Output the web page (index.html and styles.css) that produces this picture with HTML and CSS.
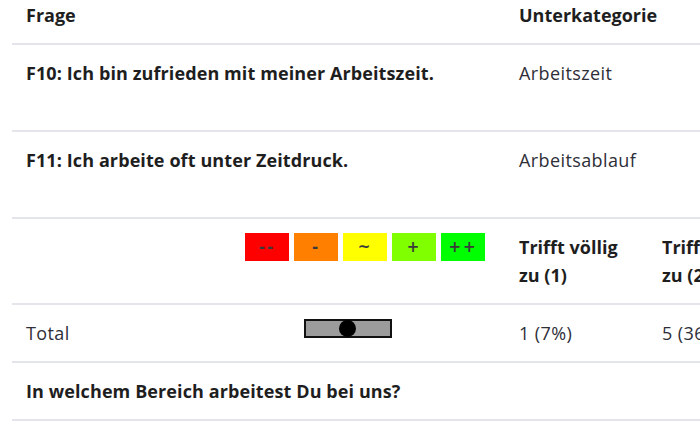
FILE: index.html
```html
<!DOCTYPE html>
<html lang="de">
<head>
<meta charset="utf-8">
<title>Auswertung</title>
<link rel="stylesheet" href="styles.css">
</head>
<body>
<table class="survey">
  <colgroup>
    <col class="c-label">
    <col class="c-scale">
    <col class="c-a">
    <col class="c-b">
  </colgroup>
  <thead>
    <tr class="head-row">
      <th colspan="2">Frage</th>
      <th colspan="2">Unterkategorie</th>
    </tr>
  </thead>
  <tbody>
    <tr class="q-row">
      <td colspan="2" class="q">F10: Ich bin zufrieden mit meiner Arbeitszeit.</td>
      <td colspan="2" class="cat">Arbeitszeit</td>
    </tr>
    <tr class="q-row">
      <td colspan="2" class="q">F11: Ich arbeite oft unter Zeitdruck.</td>
      <td colspan="2" class="cat">Arbeitsablauf</td>
    </tr>
    <tr class="scale-row">
      <td></td>
      <td>
        <div class="scale">
          <span class="box b1">--</span>
          <span class="box b2">-</span>
          <span class="box b3">~</span>
          <span class="box b4">+</span>
          <span class="box b5">++</span>
        </div>
      </td>
      <td class="opt">Trifft völlig<br>zu (1)</td>
      <td class="opt">Trifft zu<br>zu (2)</td>
    </tr>
    <tr class="total-row">
      <td class="cat">Total</td>
      <td>
        <div class="bar"><span class="dot"></span></div>
      </td>
      <td class="cat">1 (7%)</td>
      <td class="cat">5 (36%)</td>
    </tr>
    <tr class="total-row">
      <td colspan="4" class="q">In welchem Bereich arbeitest Du bei uns?</td>
    </tr>
  </tbody>
</table>
</body>
</html>
```

FILE: styles.css
```css
html, body {
  margin: 0;
  padding: 0;
  background: #ffffff;
  overflow: hidden;
}

body {
  font-family: "Open Sans", "Noto Sans", sans-serif;
  font-size: 18px;
  color: #1e1e1e;
}

.survey {
  margin-left: 12px;
  width: 800px;
  table-layout: fixed;
  border-collapse: collapse;
}

.c-label { width: 218px; }
.c-scale { width: 275px; }
.c-a { width: 143px; }
.c-b { width: 164px; }

.survey th,
.survey td {
  text-align: left;
  vertical-align: top;
  padding: 14px 14px;
  line-height: 28px;
  border-bottom: 2px solid #e4e5ea;
  white-space: nowrap;
  overflow: hidden;
}

.survey th {
  font-weight: 700;
  padding-top: 1px;
}

.q {
  font-weight: 700;
  letter-spacing: 0.1px;
}

.cat {
  font-weight: 400;
  color: #2e2e38;
  letter-spacing: 0.4px;
}

.q-row td {
  height: 57px;
}

.opt {
  font-weight: 700;
}

.scale {
  display: flex;
  gap: 5px;
  padding-left: 1px;
}

.box {
  width: 44px;
  height: 28px;
  display: flex;
  align-items: center;
  justify-content: center;
  font-family: "DejaVu Sans", sans-serif;
  font-size: 15px;
  font-weight: 700;
  letter-spacing: 2px;
  color: #3a3a3a;
  box-sizing: border-box;
}

.b1 { background: #ff0000; }
.b2 { background: #ff8000; }
.b3 { background: #ffff00; }
.b4 { background: #80ff00; }
.b5 { background: #00ff00; }

.bar {
  position: relative;
  width: 88px;
  height: 19px;
  margin-left: 60px;
  box-sizing: border-box;
  border: 2px solid #111;
  background: #9c9c9c;
}

.dot {
  position: absolute;
  left: 33px;
  top: -1px;
  width: 17px;
  height: 17px;
  border-radius: 50%;
  background: #000;
}
```
